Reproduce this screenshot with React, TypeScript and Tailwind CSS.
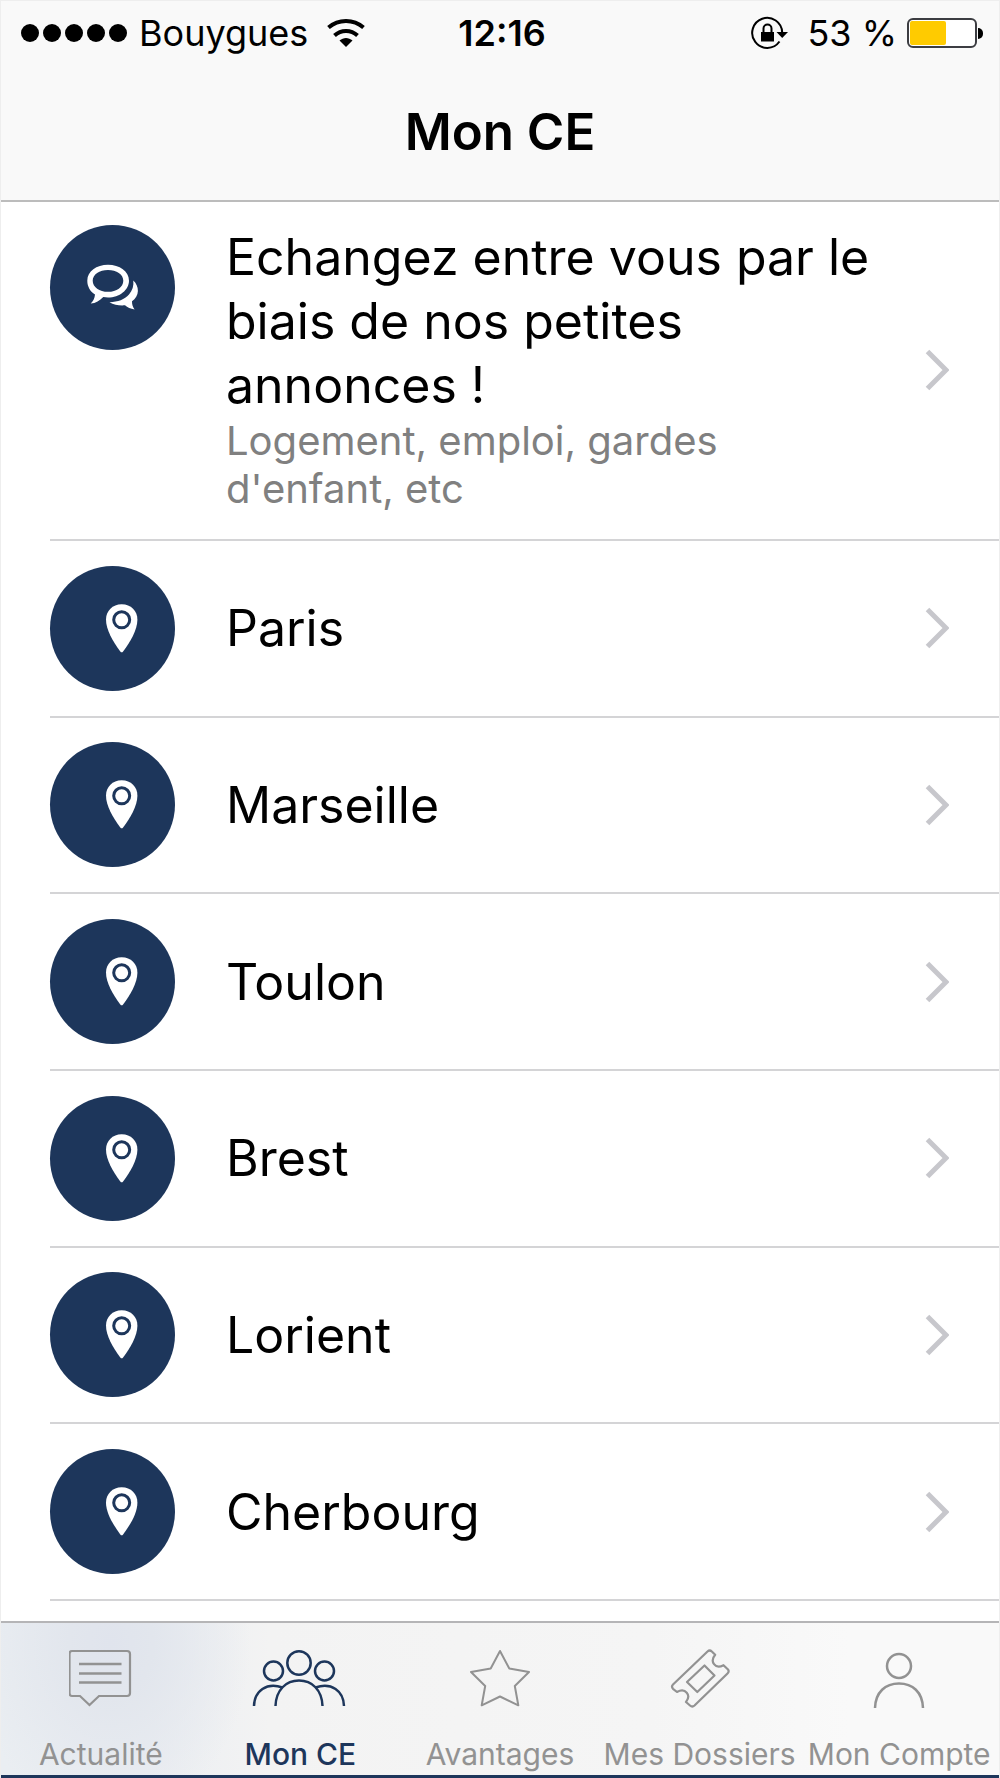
import React from "react";
import clsx from "clsx";

const cities = ["Paris", "Marseille", "Toulon", "Brest", "Lorient", "Cherbourg"];

const WifiIcon = () => (
  <svg width="40" height="30" viewBox="0 0 40 30" fill="none" stroke="black" strokeWidth="4">
    <path d="M2.5 9.5C12.5 0.8 27.5 0.8 37.5 9.5" />
    <path d="M8.5 17.5C15 11.4 25 11.4 31.500 17.5" />
    <path d="M13.500 22.500C17.500 19 22.500 19 26.500 22.500L20 29Z" fill="black" stroke="none" />
  </svg>
);

const RotationLockIcon = () => (
  <svg width="38" height="34" viewBox="0 0 38 34" fill="none" stroke="black" strokeWidth="2">
    <path d="M28.500 25.500A15 15 0 1 1 31.200 16.500" />
    <path d="M25.500 16H37L31.200 22Z" fill="black" stroke="none" />
    <path d="M10 16H23V25.500H10Z" fill="black" stroke="none" />
    <path d="M12.500 17V12.500a4 4 0 0 1 8 0V17" />
  </svg>
);

const BatteryIcon = () => (
  <span className="flex items-center gap-px">
    <span className="block h-[30px] w-[70px] rounded-md border-2 border-[#3c3d42] bg-white p-px">
      <span className="block h-full w-[36px] rounded-xs bg-[#ffcb00]"></span>
    </span>
    <span className="h-[11px] w-[5px] rounded-r-full bg-black"></span>
  </span>
);

const ChevronIcon = () => (
  <svg className="shrink-0" width="24" height="42" viewBox="0 0 24 42" fill="none">
    <path d="M2.500 2.500L21 21L2.500 39.500" stroke="#c7c7cc" strokeWidth="5" />
  </svg>
);

const ChatIcon = () => (
  <svg width="125" height="125" viewBox="0 0 125 125" fill="white">
    <path
      fillRule="evenodd"
      d="M58 39.800C69.500 39.800 79 46.500 79 55.700S69.500 72.500 58 72.500C56.300 72.500 54.800 72.300 53.300 72C49.500 75.500 46 78.300 40.700 78.600C43 76.500 44.700 73.500 45 69.500C40.200 66.500 37.300 61.500 37.300 55.700C37.300 46.500 46.500 39.800 58 39.800ZM58 45C49.500 45 42.700 49.500 42.700 55.700C42.700 62 49.500 66.800 58 66.800S73.300 62 73.300 55.700S66.500 45 58 45Z"
    />
    <path d="M83.300 55.500C86.500 58.500 87.900 62 87.900 66C87.800 70.500 85.500 73.500 82 76.300C82 79.500 82.600 82 84.600 84.400C80.500 84 77.500 82.500 75 80.300C69.500 80.800 64 79.800 59.500 77.200C68 77 74.500 74.500 79 69.500C82.500 65.500 83.900 60.500 83.300 55.500Z" />
  </svg>
);

const PinIcon = () => (
  <svg width="125" height="125" viewBox="0 0 125 125">
    <path
      d="M71.700 38.300C62.500 38.300 56 45 56 53.500C56 64 63 75.500 70.300 85.500Q71.700 87.200 73.100 85.500C80.500 75.500 87.400 64 87.400 53.500C87.400 45 81 38.300 71.700 38.300Z"
      fill="white"
    />
    <circle cx="71.700" cy="53.800" r="8" fill="white" stroke="#1d365b" strokeWidth="3" />
  </svg>
);

const NewsIcon = () => (
  <svg width="64" height="60" viewBox="1 0 64 60" fill="none" stroke="currentColor" strokeWidth="2.200">
    <path d="M5 3H59Q62 3 62 6V45Q62 48 59 48H31L21.500 57L12 48H4Q1.500 48 1.500 45V6Q1.500 3 4 3Z" />
    <path d="M11 16H53.500M11 25.500H53.500M11 34.500H53.500" strokeWidth="2.500" />
  </svg>
);

const PeopleIcon = () => (
  <svg width="96" height="60" viewBox="1 0 96 60" fill="none" stroke="currentColor" strokeWidth="2.500">
    <circle cx="48" cy="15" r="11.700" />
    <circle cx="22.500" cy="23" r="9.500" />
    <circle cx="73.500" cy="23" r="9.500" />
    <path d="M24.500 58C25 42 35 32.500 48 32.500S71 42 71.500 58" />
    <path d="M3 58C3.500 43 15.500 34 31.500 39.500" />
    <path d="M93 58C92.500 43 80.500 34 64.500 39.500" />
  </svg>
);

const StarIcon = () => (
  <svg width="64" height="60" viewBox="0 0 64 60" fill="none" stroke="currentColor" strokeWidth="2" strokeLinejoin="round">
    <path d="M32 3L41.300 20.500L61 24L46.800 38L50.300 57.300L32 48.500L13.700 57.300L17.200 38L3 24L22.700 20.500Z" />
  </svg>
);

const TicketIcon = () => (
  <svg width="64" height="60" viewBox="0 0 64 60" fill="none" stroke="currentColor" strokeWidth="2.200" strokeLinejoin="round">
    <path d="M39.500 3.500Q41.700 1.500 43.800 3.500L47.200 6.800C41.500 13.500 47 21.500 55.500 17.200L60 21.500Q61.500 23.500 59.500 25.500L26.500 57.500Q24.300 59.500 22 57.500L18 54C23.500 47 17.500 39.500 9 44L5 40.800Q3 38.500 5 36.500Z" />
    <path d="M36.500 17.500L46.500 27.500L29.300 44L19 34Z" />
  </svg>
);

const PersonIcon = () => (
  <svg width="64" height="60" viewBox="0 0 64 60" fill="none" stroke="currentColor" strokeWidth="2.500">
    <circle cx="32" cy="18" r="12" />
    <path d="M8 60C8.500 44 18.500 35.500 32 35.500S55.500 44 56 60" />
  </svg>
);

const tabs = [
  { label: "Actualité", icon: <NewsIcon /> },
  { label: "Mon CE", icon: <PeopleIcon />, active: true },
  { label: "Avantages", icon: <StarIcon /> },
  { label: "Mes Dossiers", icon: <TicketIcon /> },
  { label: "Mon Compte", icon: <PersonIcon /> },
];

const Badge = ({ children }: { children: React.ReactNode }) => (
  <span className="size-[125px] shrink-0 rounded-full bg-[#1d365b]">{children}</span>
);

const App = () => {
  return (
    <div className="flex min-h-screen flex-col border-x border-t border-[#eeeeee] bg-white font-['Inter',sans-serif] text-black">
      <header className="border-b-2 border-[#bcbcbc] bg-[#f9f9f9]">
        <div className="grid h-16 grid-cols-[1fr_auto_1fr] items-center pr-4 pl-5 text-[36px] leading-10">
          <div className="flex items-center gap-3">
            <span className="flex gap-1">
              {[1, 2, 3, 4, 5].map((dot) => (
                <span key={dot} className="size-[18px] rounded-full bg-black"></span>
              ))}
            </span>
            <span>Bouygues</span>
            <span className="pl-1.5">
              <WifiIcon />
            </span>
          </div>
          <time className="font-semibold">12:16</time>
          <div className="flex items-center justify-end gap-2.5">
            <span className="pr-2">
              <RotationLockIcon />
            </span>
            <span>53 %</span>
            <BatteryIcon />
          </div>
        </div>
        <h1 className="pt-[35px] pb-9 text-center text-[51px] leading-16 font-semibold">Mon CE</h1>
      </header>

      <main className="flex flex-1 flex-col pb-5">
        <a href="#annonces" className="ml-[49px] flex border-b-2 border-[#d4d4d6] pt-[23px] pr-[50px] pb-6">
          <Badge>
            <ChatIcon />
          </Badge>
          <div className="flex-1 pb-0.5 pl-[51px]">
            <h2 className="max-w-[680px] text-[50px] leading-16">
              Echangez entre vous par le biais de nos petites annonces !
            </h2>
            <p className="max-w-[560px] text-[40px] leading-12 text-[#808080]">
              Logement, emploi, gardes d'enfant, etc
            </p>
          </div>
          <span className="flex items-center">
            <ChevronIcon />
          </span>
        </a>

        <ul className="grid flex-1 auto-rows-fr">
          {cities.map((city) => (
            <li key={city} className="ml-[49px] border-b-2 border-[#d4d4d6]">
              <a href={"#" + city.toLowerCase()} className="flex h-full items-center py-6 pr-[50px]">
                <Badge>
                  <PinIcon />
                </Badge>
                <span className="flex-1 pl-[51px] text-[50px] leading-16">{city}</span>
                <ChevronIcon />
              </a>
            </li>
          ))}
        </ul>
      </main>

      <nav className="grid grid-cols-5 border-t-2 border-b-3 border-t-[#b5b5b7] border-b-[#1d365b] bg-[radial-gradient(ellipse_140px_180px_at_110px_20px,#e0e4ed,#e2e6ed_30%,transparent),linear-gradient(to_right,#eaeef2,#ebeef2_15%,#f3f3f3_27%,#f5f5f5_65%,#f9f9f9_85%)]">
        {tabs.map(({ label, icon, active }) => (
          <a
            key={label}
            href="#"
            className={clsx(
              "flex flex-col items-center pt-[25px] pb-[3px] text-[30px] leading-9 whitespace-nowrap",
              active ? "font-medium text-[#1d365b]" : "text-[#929292]"
            )}
          >
            {icon}
            <span className="pt-7">{label}</span>
          </a>
        ))}
      </nav>
    </div>
  );
};

export default App;
